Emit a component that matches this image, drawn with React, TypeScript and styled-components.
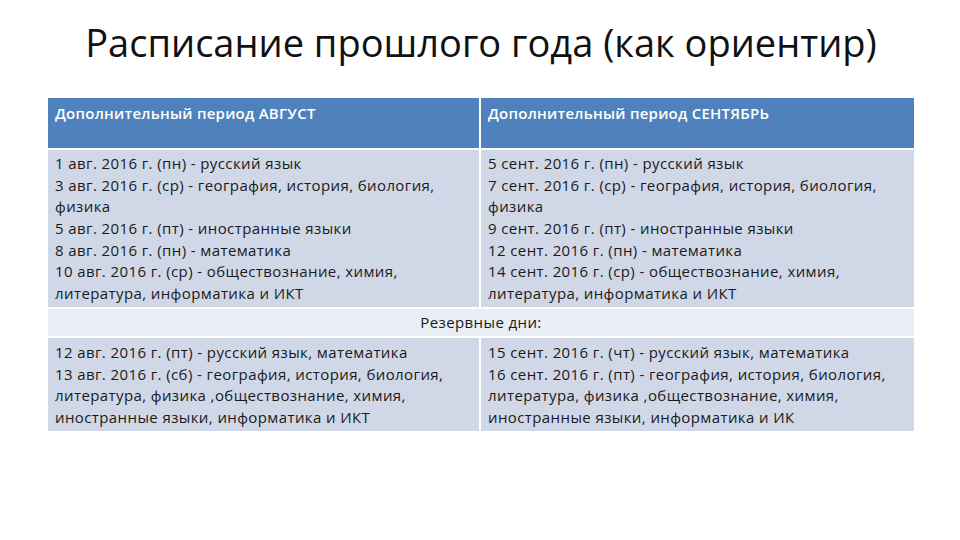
import styled, { createGlobalStyle } from "styled-components";

const GlobalStyle = createGlobalStyle`
  html, body {
    margin: 0;
    padding: 0;
    background: #ffffff;
  }
  body {
    font-family: "Open Sans", "Noto Sans", sans-serif;
  }
`;

const augustLines = [
  "1 авг. 2016 г. (пн) - русский язык",
  "3 авг. 2016 г. (ср) - география, история, биология,",
  "физика",
  "5 авг. 2016 г. (пт) - иностранные языки",
  "8 авг. 2016 г. (пн) - математика",
  "10 авг. 2016 г. (ср) - обществознание, химия,",
  "литература, информатика и ИКТ",
];

const septemberLines = [
  "5 сент. 2016 г. (пн) - русский язык",
  "7 сент. 2016 г. (ср) - география, история, биология,",
  "физика",
  "9 сент. 2016 г. (пт) - иностранные языки",
  "12 сент. 2016 г. (пн) - математика",
  "14 сент. 2016 г. (ср) - обществознание, химия,",
  "литература, информатика и ИКТ",
];

const augustReserve = [
  "12 авг. 2016 г. (пт) - русский язык, математика",
  "13 авг. 2016 г. (сб) - география, история, биология,",
  "литература, физика ,обществознание, химия,",
  "иностранные языки, информатика и ИКТ",
];

const septemberReserve = [
  "15 сент. 2016 г. (чт) - русский язык, математика",
  "16 сент. 2016 г. (пт) - география, история, биология,",
  "литература, физика ,обществознание, химия,",
  "иностранные языки, информатика и ИК",
];

export default function App() {
  return (
    <Slide>
      <GlobalStyle />
      <Title>Расписание прошлого года (как ориентир)</Title>
      <Table>
        <HeadCell>Дополнительный период АВГУСТ</HeadCell>
        <HeadCell>Дополнительный период СЕНТЯБРЬ</HeadCell>

        <BodyCell>
          {augustLines.map((line) => (
            <Line key={line}>{line}</Line>
          ))}
        </BodyCell>
        <BodyCell>
          {septemberLines.map((line) => (
            <Line key={line}>{line}</Line>
          ))}
        </BodyCell>

        <ReserveCell>Резервные дни:</ReserveCell>

        <BodyCell $tight>
          {augustReserve.map((line) => (
            <Line key={line}>{line}</Line>
          ))}
        </BodyCell>
        <BodyCell $tight>
          {septemberReserve.map((line) => (
            <Line key={line}>{line}</Line>
          ))}
        </BodyCell>
      </Table>
    </Slide>
  );
}

const Slide = styled.div`
  width: 960px;
  height: 540px;
  box-sizing: border-box;
  padding: 8px 46px 0 48px;
  background: #ffffff;
  overflow: hidden;
`;

const Title = styled.h1`
  margin: 0 0 12px;
  height: 78px;
  display: flex;
  align-items: center;
  justify-content: center;
  padding-bottom: 10px;
  box-sizing: border-box;
  font-family: "Open Sans", "Noto Sans", sans-serif;
  font-weight: 400;
  font-size: 38px;
  letter-spacing: 0;
  color: #111111;
`;

const Table = styled.div`
  display: grid;
  grid-template-columns: 431px 433px;
  gap: 2px;
  width: 866px;
`;

const HeadCell = styled.div`
  height: 50px;
  box-sizing: border-box;
  padding: 5px 7px 0;
  background: #4f81bd;
  color: #ffffff;
  font-weight: 600;
  font-size: 15px;
  letter-spacing: 0.25px;
  line-height: 21px;
`;

const BodyCell = styled.div<{ $tight?: boolean }>`
  box-sizing: border-box;
  padding: ${(p) => (p.$tight ? "4px 7px 2px" : "3px 7px 2px")};
  background: #d0d8e8;
  color: #1a1a1a;
  font-size: 15px;
  letter-spacing: 0.4px;
`;

const Line = styled.div`
  height: 21.7px;
  line-height: 21.7px;
  white-space: nowrap;
`;

const ReserveCell = styled.div`
  grid-column: 1 / span 2;
  height: 27px;
  display: flex;
  align-items: center;
  justify-content: center;
  background: #e9edf4;
  color: #1a1a1a;
  font-size: 15px;
  letter-spacing: 0.4px;
`;
